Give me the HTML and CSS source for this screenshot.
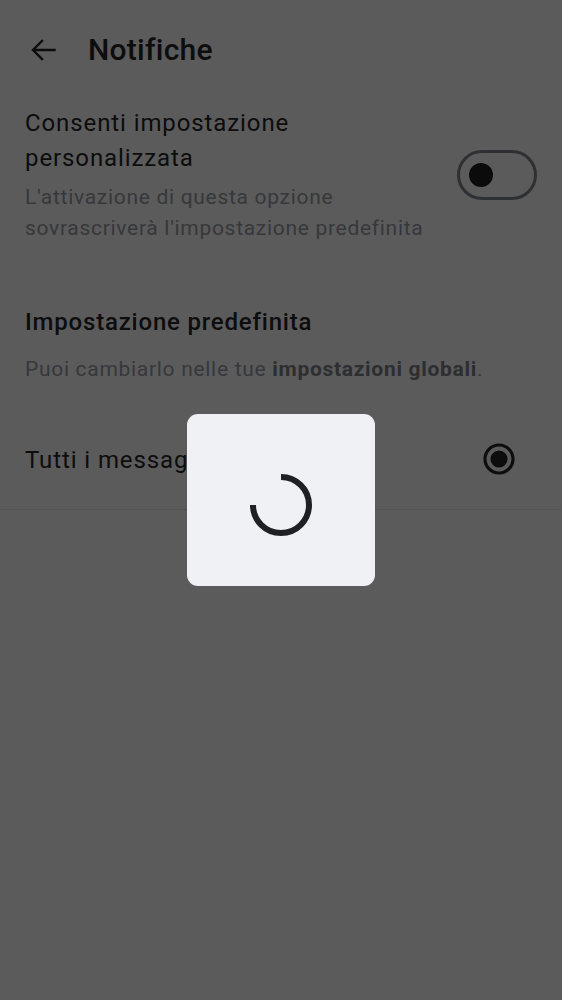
FILE: index.html
```html
<!DOCTYPE html>
<html lang="it">
<head>
<meta charset="utf-8">
<title>Notifiche</title>
<link rel="stylesheet" href="styles.css">
</head>
<body>
<div class="page">
  <header class="topbar">
    <svg class="back" width="26" height="22" viewBox="0 0 26 22" aria-hidden="true">
      <path d="M23.5 11H2.5M11 2L2 11l9 9" fill="none" stroke="#262628" stroke-width="2.4" stroke-linecap="square" stroke-linejoin="miter"/>
    </svg>
    <h1 class="title">Notifiche</h1>
  </header>

  <section class="custom">
    <div class="custom-text">
      <div class="label">Consenti impostazione personalizzata</div>
      <div class="hint">L'attivazione di questa opzione sovrascriverà l'impostazione predefinita</div>
    </div>
    <div class="toggle"><span class="knob"></span></div>
  </section>

  <section class="default">
    <h2 class="subtitle">Impostazione predefinita</h2>
    <p class="hint">Puoi cambiarlo nelle tue <strong>impostazioni globali</strong>.</p>
  </section>

  <div class="option">
    <span class="option-label">Tutti i messaggi</span>
    <svg class="radio" width="32" height="32" viewBox="0 0 32 32" aria-hidden="true">
      <circle cx="16" cy="16" r="14" fill="none" stroke="#262628" stroke-width="3.2"/>
      <circle cx="16" cy="16" r="8.6" fill="#262628"/>
    </svg>
  </div>
</div>

<div class="overlay"></div>
<div class="loader">
  <svg class="spinner" width="62" height="62" viewBox="0 0 62 62" aria-hidden="true">
    <path d="M31 3 A28 28 0 1 1 3 31" fill="none" stroke="#1f2024" stroke-width="6"/>
  </svg>
</div>
</body>
</html>
```
FILE: styles.css
```css
* { box-sizing: border-box; }
html, body { margin: 0; padding: 0; }
body {
  background: #ffffff;
  font-family: Roboto, "Noto Sans", "Liberation Sans", sans-serif;
  color: #262628;
  width: 562px;
  height: 1000px;
  overflow: hidden;
}
.page { display: flex; flex-direction: column; }

.topbar {
  display: flex;
  align-items: center;
  gap: 31px;
  padding: 32px 0 0 31px;
  height: 68px;
}
.back { display: block; }
.title {
  margin: 0;
  font-size: 30px;
  line-height: 36px;
  font-weight: 500;
  letter-spacing: 0.25px;
  color: #262628;
}

.custom {
  display: flex;
  align-items: center;
  justify-content: space-between;
  padding: 38px 25px 0 25px;
}
.custom-text { flex: 1; max-width: 415px; }
.label {
  font-size: 24px;
  line-height: 35px;
  letter-spacing: 0.9px;
  color: #262628;
}
.hint {
  font-size: 21px;
  line-height: 31px;
  letter-spacing: 0.7px;
  color: #989da6;
  margin: 6px 0 0 0;
}
.hint strong { font-weight: 700; color: #7c818a; }
.toggle {
  width: 80px;
  height: 50px;
  border: 3px solid #83878e;
  border-radius: 25px;
  display: flex;
  align-items: center;
  padding-left: 9px;
  flex-shrink: 0;
}
.knob {
  width: 24px;
  height: 24px;
  border-radius: 50%;
  background: #1f2024;
}

.default { padding: 62px 25px 0 25px; }
.subtitle {
  margin: 0;
  font-size: 24px;
  line-height: 32px;
  font-weight: 500;
  letter-spacing: 0.8px;
  color: #262628;
}
.default .hint { margin-top: 16px; }

.option {
  display: flex;
  justify-content: space-between;
  align-items: flex-start;
  padding: 58px 47px 0 25px;
  height: 125px;
  border-bottom: 1px solid #e6e6e6;
}
.option-label {
  font-size: 24px;
  line-height: 35px;
  letter-spacing: 0.9px;
  color: #262628;
}
.radio { display: block; margin-top: 0; }

.overlay {
  position: fixed;
  inset: 0;
  background: rgba(0, 0, 0, 0.643);
}
.loader {
  position: fixed;
  left: 187px;
  top: 414px;
  width: 188px;
  height: 172px;
  background: #f0f1f5;
  border-radius: 11px;
  display: flex;
  align-items: center;
  justify-content: center;
  padding-top: 9px;
}
.spinner { display: block; }
```
